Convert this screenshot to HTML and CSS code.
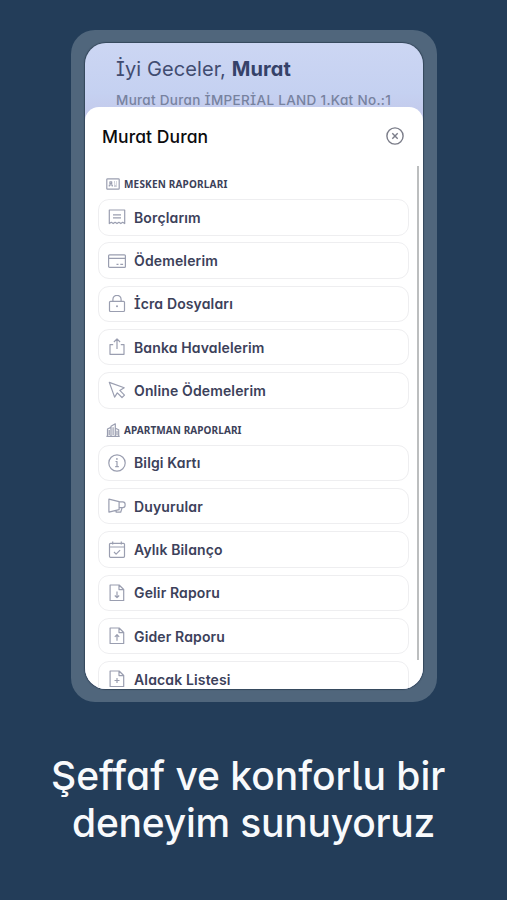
FILE: index.html
```html
<!DOCTYPE html>
<html lang="tr">
  <head>
    <meta charset="UTF-8" />
    <meta name="viewport" content="width=device-width, initial-scale=1.0" />
    <title>Raporlar</title>
    <link rel="stylesheet" href="styles.css">
  </head>
  <body>
    <div class="phone">
      <div class="screen">
        <div class="greeting">
          <h1>İyi Geceler, <b>Murat</b></h1>
          <p>Murat Duran İMPERİAL LAND 1.Kat No.:1</p>
        </div>

        <div class="sheet">
          <div class="sheet-header">
            <h2>Murat Duran</h2>
            <svg class="close" viewBox="0 0 18 18"><circle cx="9" cy="9" r="8.1"/><path d="M6.3 6.3l5.4 5.4M11.7 6.3l-5.4 5.4"/></svg>
          </div>

          <div class="sheet-body">
            <h3>
              <svg viewBox="0 0 14 12"><rect x=".8" y=".8" width="12.4" height="10.4" rx=".8"/><path d="M3.3 8.5V7h3v1.5M3.9 3.8h1.8v1.8H3.9zM8 4h1M10 4h.8M8 6h.8M9.8 6h1M8 8h2.8"/></svg>
              <span class="t-mesken">MESKEN RAPORLARI</span>
            </h3>
            <div class="list">
              <div class="item">
                <svg viewBox="0 0 18 18"><path d="M1.3 2h15.4v13.6l-2-1.3-1.9 1.3-1.9-1.3L9 15.6l-1.9-1.3-1.9 1.3-1.9-1.3-2 1.3zM5 6.8h8M5 9.8h8"/></svg>
                <span>Borçlarım</span>
              </div>
              <div class="item">
                <svg viewBox="0 0 18 18"><rect x=".6" y="2.8" width="16.8" height="12.6" rx="1"/><path d="M.6 6.3h16.8M8.5 12.3h2M12.3 12.3h2.8"/></svg>
                <span>Ödemelerim</span>
              </div>
              <div class="item">
                <svg viewBox="0 0 18 18"><rect x="1.5" y="6.3" width="15" height="10.2" rx="1"/><path d="M4.9 6.3V4.4a4.1 4.1 0 0 1 8.2 0v1.9"/><circle class="dot" cx="9" cy="11.3" r="1"/></svg>
                <span>İcra Dosyaları</span>
              </div>
              <div class="item">
                <svg viewBox="0 0 18 18"><path d="M5.2 6.6H2v9.7h14V6.6h-3.2M9 11V1M5.9 4L9 .9 12.1 4"/></svg>
                <span>Banka Havalelerim</span>
              </div>
              <div class="item">
                <svg viewBox="0 0 18 18"><path d="M1.3 1.4l14.9 5.3-4.4 2.7 4.7 4.7-2.5 2.4-4.7-4.6-2.7 4.2z"/></svg>
                <span>Online Ödemelerim</span>
              </div>
            </div>

            <h3 class="second">
              <svg viewBox="0 0 14 14"><path d="M.4 13.3h13.3M1.5 13V6l3.4-1.6M5 13V3.2L9.3.8V13M9.3 5.2l3.4 1.5V13M3.2 7v5M7.1 4.3V12M11 7.7V12"/></svg>
              <span class="t-apartman">APARTMAN RAPORLARI</span>
            </h3>
            <div class="list">
              <div class="item">
                <svg viewBox="0 0 18 18"><circle cx="9" cy="9" r="8.2"/><path d="M7.5 7.5H9v5.2M7.2 12.7h3.6"/><circle class="dot" cx="8.9" cy="4.9" r=".9"/></svg>
                <span>Bilgi Kartı</span>
              </div>
              <div class="item">
                <svg viewBox="0 0 18 18"><path d="M.9 2.2v12.9l10.2-2.4V4.6zM11.1 4.8h3.6a2.4 2.4 0 0 1 2.4 2.4v1a2.4 2.4 0 0 1-2.4 2.4h-3.6M8.2 13.4v1.8h4.5l1.4-4.5"/></svg>
                <span>Duyurular</span>
              </div>
              <div class="item">
                <svg viewBox="0 0 18 18"><rect x="1.5" y="2.3" width="15" height="14" rx="1"/><path d="M1.5 6h15M4.7.6v3M13.3.6v3M6 11l2.1 2.1 4-4"/></svg>
                <span>Aylık Bilanço</span>
              </div>
              <div class="item">
                <svg viewBox="0 0 18 18"><path d="M2.1 1h9l4.6 4.5v11H2.1zM11 1v4.6h4.7M9 7.4v6.2M6.8 11.5L9 13.7l2.2-2.2"/></svg>
                <span>Gelir Raporu</span>
              </div>
              <div class="item">
                <svg viewBox="0 0 18 18"><path d="M2.1 1h9l4.6 4.5v11H2.1zM11 1v4.6h4.7M9 13.7V7.6M6.8 9.8L9 7.6l2.2 2.2"/></svg>
                <span>Gider Raporu</span>
              </div>
              <div class="item">
                <svg viewBox="0 0 18 18"><path d="M2.1 1h9l4.6 4.5v11H2.1zM11 1v4.6h4.7M9 8v5M6.5 10.5h5"/></svg>
                <span>Alacak Listesi</span>
              </div>
            </div>
          </div>
          <div class="scrollbar"></div>
        </div>
      </div>
    </div>

    <div class="slogan">
      <div class="line-1">Şeffaf ve konforlu bir</div>
      <div class="line-2">deneyim sunuyoruz</div>
    </div>
  </body>
</html>
```

FILE: styles.css
```css
* {
  box-sizing: border-box;
}
body {
  margin: 0;
  height: 900px;
  padding-top: 30px;
  overflow: hidden;
  background-color: #233d59;
  font-family: Inter, "Liberation Sans", sans-serif;
  /* single-storey a, serifed capital I */
  font-feature-settings: "cv11", "cv08";
}
h1,
h2,
h3,
p {
  margin: 0;
  white-space: nowrap;
}
svg {
  fill: none;
  stroke: #9a9eb0;
  stroke-width: 1.2;
  stroke-linejoin: round;
  flex-shrink: 0;
}
.dot {
  fill: #9a9eb0;
  stroke: none;
}
.phone {
  width: 366px;
  height: 672px;
  margin-left: 71px;
  padding: 13px 14px;
  border-radius: 24px;
  background-color: #50667c;
}
.screen {
  display: flex;
  flex-direction: column;
  height: 646px;
  border-radius: 21px;
  overflow: hidden;
  background: linear-gradient(#ccd6f3, #c5d1f1 50px, #c3c7e9 80px);
  box-shadow: 0 0 1px 1px #34475b;
}
.greeting {
  height: 64px;
  padding: 13px 0 0 31px;
  color: #414c70;
}
.greeting h1 {
  font-size: 20px;
  line-height: 26px;
  letter-spacing: 0.1px;
  font-weight: 400;
}
.greeting b {
  font-weight: 700;
  color: #354269;
}
.greeting p {
  margin-top: 8px;
  font-size: 13.5px;
  line-height: 20px;
  letter-spacing: 0.31px;
  font-weight: 500;
  color: #77829f;
}
.sheet {
  position: relative;
  flex: 1;
  min-height: 0;
  border-radius: 14px 14px 0 0;
  background-color: #fff;
  overflow: hidden;
}
.sheet-header {
  display: flex;
  justify-content: space-between;
  align-items: center;
  height: 59px;
  padding: 0 19px 0 17px;
}
.sheet-header h2 {
  font-size: 17.5px;
  letter-spacing: 0.08px;
  font-weight: 500;
  color: #0b0b0d;
}
.close {
  width: 18px;
  height: 18px;
  margin-bottom: 1px;
  stroke: #7b7d89;
  stroke-width: 1.4;
}
.sheet-body {
  padding: 9px 14px 0 13px;
}
h3 {
  display: flex;
  align-items: center;
  gap: 4px;
  height: 18px;
  padding-left: 8px;
  font-family: "Noto Sans", sans-serif;
  font-size: 10px;
  font-weight: 700;
  color: #3c4159;
}
h3 svg {
  width: 14px;
  height: 14px;
}
h3.second {
  margin-top: 12px;
}
.t-mesken {
  letter-spacing: 0.18px;
}
.t-apartman {
  letter-spacing: 0.08px;
}
.list {
  display: flex;
  flex-direction: column;
  gap: 6.8px;
  margin-top: 6px;
}
.item {
  display: flex;
  align-items: center;
  gap: 8.5px;
  height: 36.5px;
  padding-left: 8.5px;
  border: 1px solid #eeeef0;
  border-radius: 11px;
  font-size: 14px;
  letter-spacing: 0.14px;
  font-weight: 600;
  white-space: nowrap;
  color: #3c415a;
}
.item svg {
  width: 18px;
  height: 18px;
}
.scrollbar {
  position: absolute;
  top: 59px;
  right: 4px;
  width: 2.5px;
  height: 494px;
  background-color: #bcbebf;
}
.slogan {
  margin-top: 50px;
  font-size: 39px;
  line-height: 47px;
  font-weight: 500;
  white-space: nowrap;
  color: #f8fafc;
  font-feature-settings: "cv11", "cv05";
}
.line-1 {
  padding-left: 51px;
}
.line-2 {
  padding-left: 72px;
  letter-spacing: -0.22px;
}
```
